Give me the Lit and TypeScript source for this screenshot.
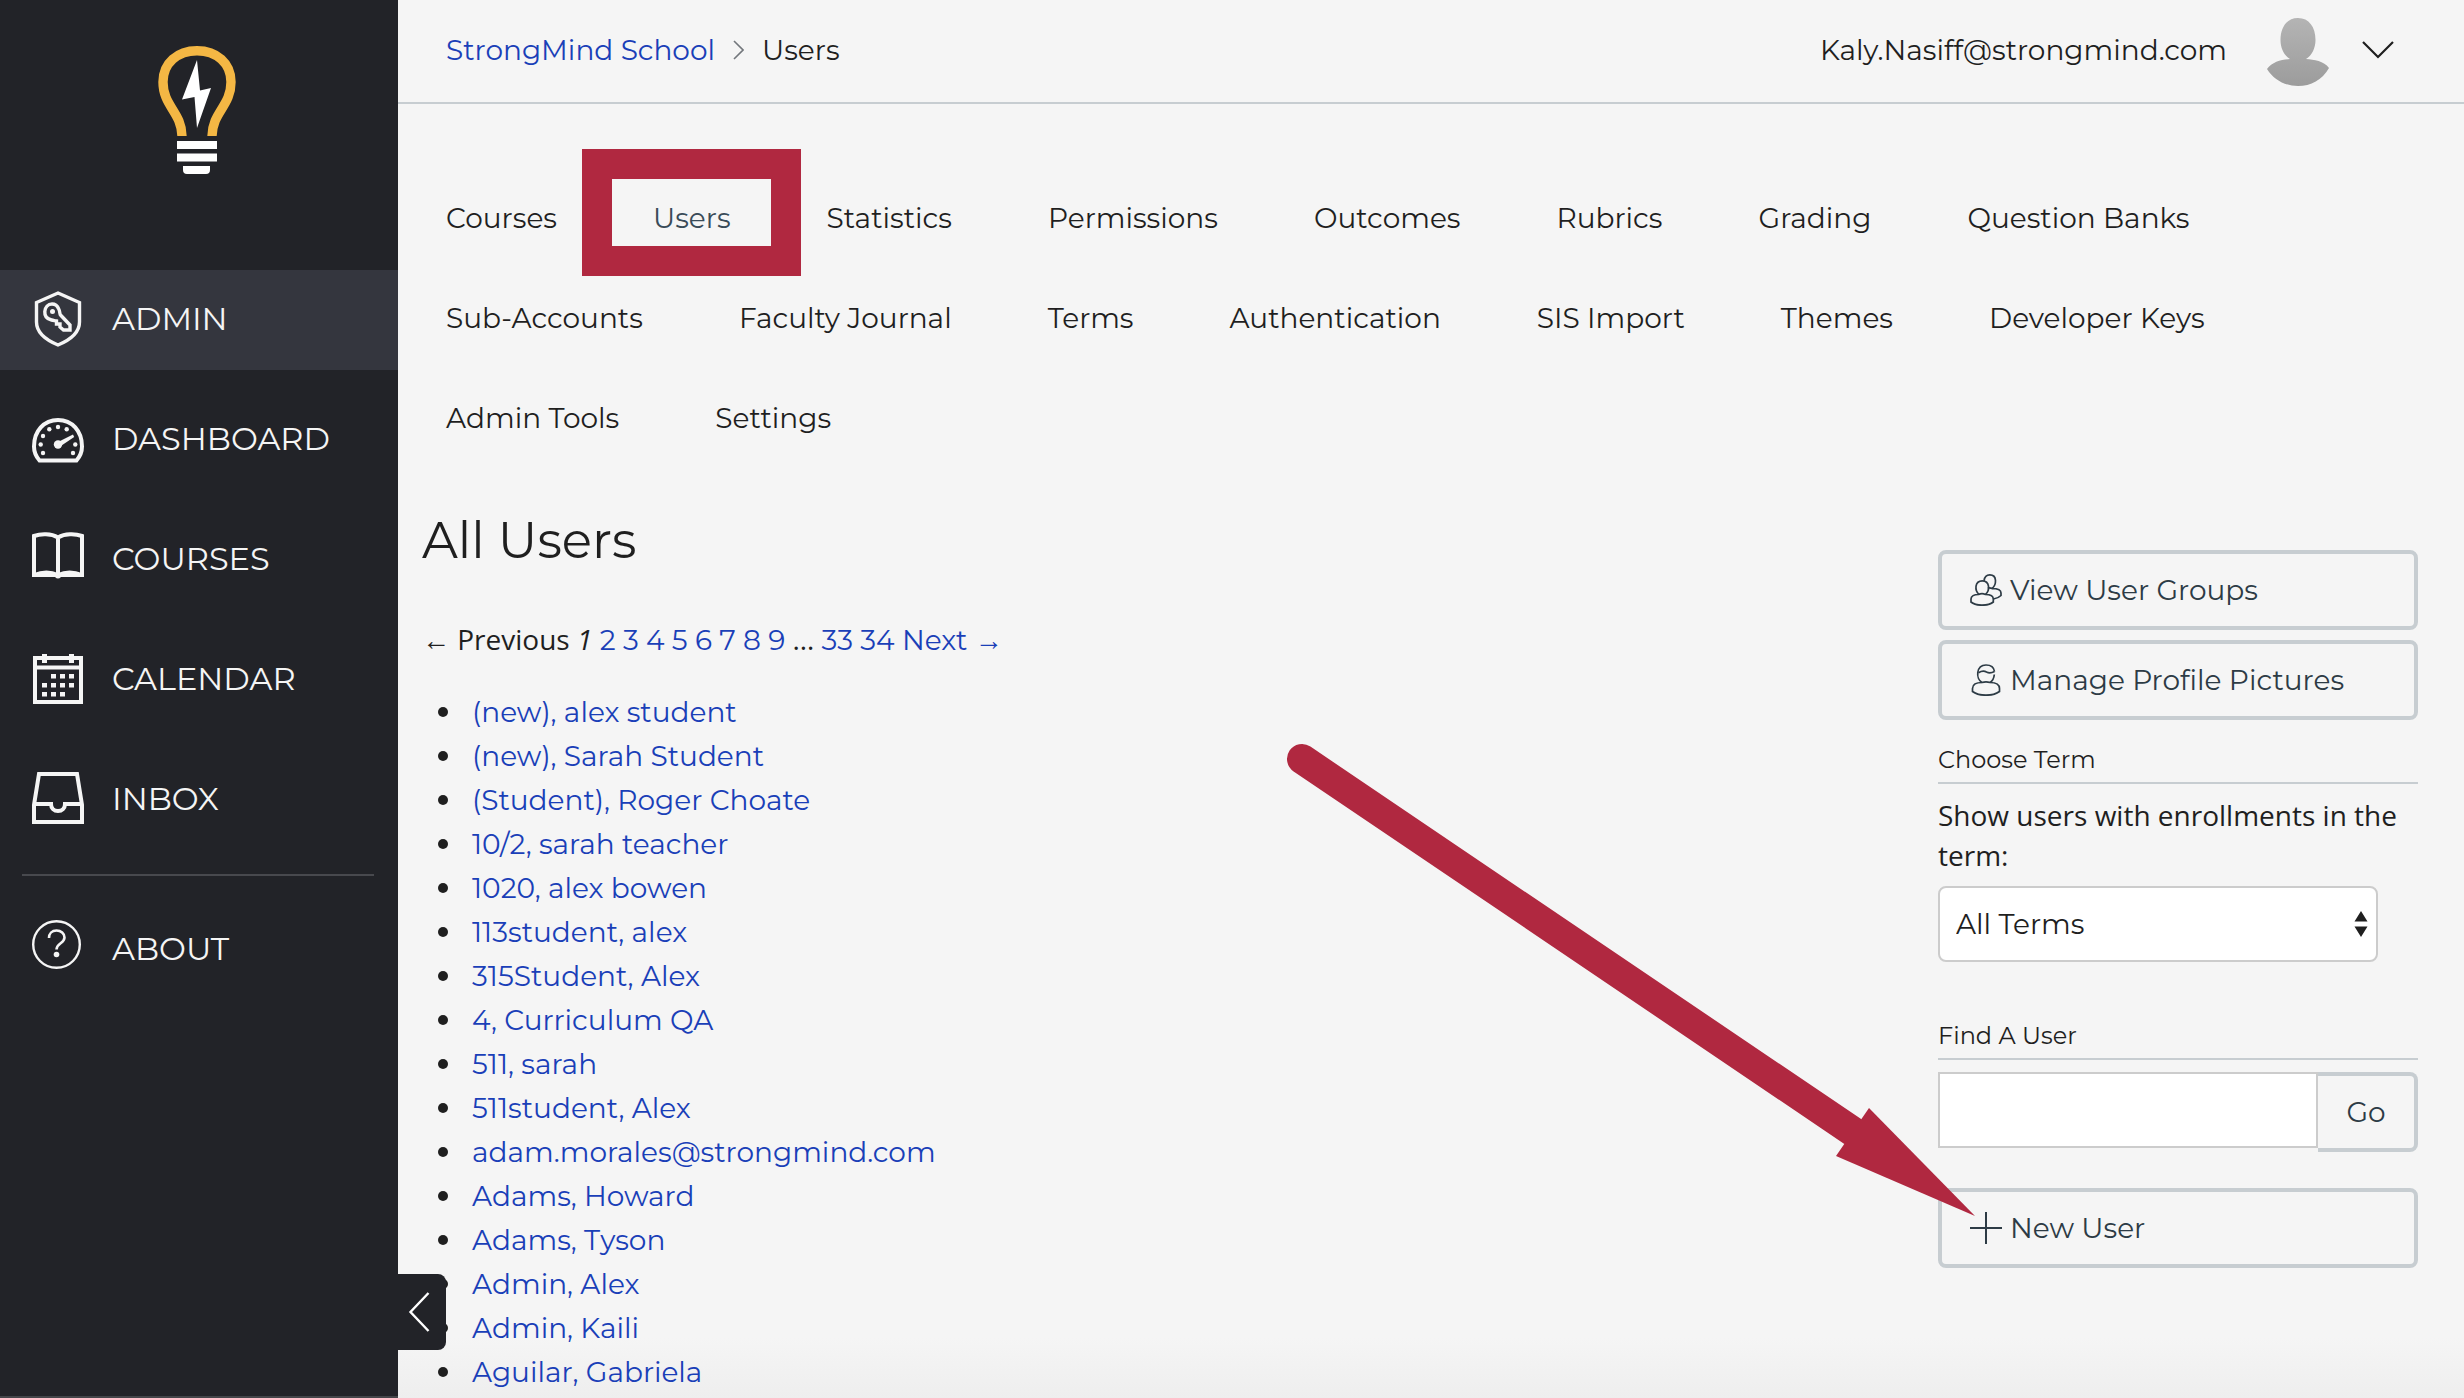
import { LitElement, html, css, svg } from "lit";
import { customElement } from "lit/decorators.js";

const icons = {
  admin: svg`<svg class="icon" viewBox="0 0 52 60"><g fill="none" stroke="#f5f5f5" stroke-width="3.4">
    <path d="M26 4 L47.5 13.500 V33 C47.500 43 38 51 26 56 C14 51 4.500 43 4.500 33 V13.500 Z"/>
    <path d="M26.500 19.500 C28.500 23 27.500 25.500 28.500 26 L38 36 V41 H31.500 L28 38 V35 H24.500 V32 C22 31.500 21.500 31.500 19.500 31 C15 30 12.500 27 12.800 22.500 C13.200 18 16 15 20 15 C23 15 25.500 17 26.500 19.500 Z"/></g>
    <circle cx="20.500" cy="22.500" r="2.500" fill="#f5f5f5"/></svg>`,
  dashboard: svg`<svg class="icon" viewBox="0 -1 52 60"><path d="M7.500 50.500 C4 46.500 2 41.500 2 36.500 C2 21 12 10 26 10 C40 10 50 21 50 36.500 C50 41.500 48 46.500 44.500 50.500 Z" fill="none" stroke="#f5f5f5" stroke-width="4"/>
    <g fill="#f5f5f5"><circle cx="11" cy="43" r="2.200"/><circle cx="8.700" cy="34.500" r="2.200"/><circle cx="11" cy="26" r="2.200"/><circle cx="17.300" cy="19.300" r="2.200"/><circle cx="26" cy="17" r="2.200"/><circle cx="34.700" cy="19.300" r="2.200"/><circle cx="43.300" cy="34.500" r="2.200"/><circle cx="41" cy="43" r="2.200"/><circle cx="26" cy="34.500" r="4.200"/><path d="M26 32 L41 24.500 L42.200 27 L28 36.500 Z"/></g></svg>`,
  courses: svg`<svg class="icon" viewBox="0 3 52 60"><path d="M2 50 V10 C9 7.500 19 7.500 26 11.500 C33 7.500 43 7.500 50 10 V50 M26 11 V50 M0 49 L2 49 C10 46 19 46 26 49 C33 46 42 46 50 49 H52" fill="none" stroke="#f5f5f5" stroke-width="4"/><path d="M2 48 H50 V51 H29 Q26 54 23 51 H2 Z" fill="#f5f5f5"/></svg>`,
  calendar: svg`<svg class="icon" viewBox="0 0 52 60"><path d="M3 9 H49 V53 H3 Z M3 18.500 H49" fill="none" stroke="#f5f5f5" stroke-width="4"/>
    <path fill="#f5f5f5" d="M10 5h5v9h-5zM37 5h5v9h-5zM19 25h5v4.500h-5zM28 25h5v4.500h-5zM37 25h5v4.500h-5zM10 34h5v4.500h-5zM19 34h5v4.500h-5zM28 34h5v4.500h-5zM37 34h5v4.500h-5zM10 43h5v4.500h-5zM19 43h5v4.500h-5zM28 43h5v4.500h-5z"/></svg>`,
  inbox: svg`<svg class="icon" viewBox="0 1 52 60"><path d="M7 6 H45 L50 37 V54 H2 V37 Z M2 36 H19 C19 40 22 43 26 43 C30 43 33 40 33 36 H50" fill="none" stroke="#f5f5f5" stroke-width="4"/></svg>`,
  about: svg`<svg class="icon" viewBox="0 1 52 60"><circle cx="24.500" cy="26.500" r="23.300" fill="none" stroke="#f5f5f5" stroke-width="2.400"/>
    <path d="M17 20 C17 15.500 20 12.500 24.500 12.500 C29 12.500 32.500 15.500 32.500 19.500 C32.500 25.500 24.500 25 24.500 31.500" fill="none" stroke="#f5f5f5" stroke-width="2.600"/><circle cx="24.500" cy="36.500" r="2.800" fill="#f5f5f5"/></svg>`,
  groups: svg`<svg class="mini" viewBox="0 0 32 32"><g fill="none" stroke="#2d3b45" stroke-width="1.700">
    <path d="M8.500 20.500 C4 20.500 1 22 1 25 V28 C4 30.500 8 31.200 12 31.200 C16 31.200 20.500 30.500 23.300 28 V25 C23.300 22 20 20.500 15.500 20.500 C13.500 19.600 10.500 19.600 8.500 20.500 Z"/>
    <path d="M9 20.300 C4.500 16.500 4.500 6.800 12.300 6.800 C20 6.800 20 16.500 15.500 20.300"/>
    <path d="M14 6.800 C14.500 3 16.500 0.900 19.800 0.900 C27.500 0.900 26.500 11 22 14.500 C20.500 13.800 19 13.800 17.800 14.200 M22 14.500 C28 14.500 31 16 31 19 V21.500 C29 23.500 26.500 24.500 23.500 25"/></g></svg>`,
  profile: svg`<svg class="mini" viewBox="0 0 32 32"><g fill="none" stroke="#2d3b45" stroke-width="1.700">
    <path d="M12 18.500 C5.500 15 6 1 16 1 C21 1 24 3.800 24.500 7.500 M24.300 10.500 C24 14 22.500 17 20 18.500"/>
    <path d="M8.500 8.700 C12 6.500 14 6.500 16.500 8 C19 9.300 22 8.800 24.500 7.500"/>
    <path d="M12 18.500 C6 18.500 2.500 20.500 2.500 24.500 V27.500 C6 30 11 31.200 16 31.200 C21 31.200 26 30 29.500 27.500 V24.500 C29.500 20.500 26 18.500 20 18.500 C17 17.500 15 17.500 12 18.500 Z"/></g></svg>`,
  plus: svg`<svg class="mini" viewBox="0 0 32 32"><path d="M16 0 V32 M0 16 H32" stroke="#2d3b45" stroke-width="2"/></svg>`,
};

const menu = [
  { label: "ADMIN", icon: icons.admin, active: true },
  { label: "DASHBOARD", icon: icons.dashboard },
  { label: "COURSES", icon: icons.courses },
  { label: "CALENDAR", icon: icons.calendar },
  { label: "INBOX", icon: icons.inbox },
];

const tabs = [
  "Courses", "Users", "Statistics", "Permissions", "Outcomes", "Rubrics", "Grading", "Question Banks",
  "Sub-Accounts", "Faculty Journal", "Terms", "Authentication", "SIS Import", "Themes", "Developer Keys",
  "Admin Tools", "Settings",
];

const users = [
  "(new), alex student", "(new), Sarah Student", "(Student), Roger Choate", "10/2, sarah teacher",
  "1020, alex bowen", "113student, alex", "315Student, Alex", "4, Curriculum QA", "511, sarah",
  "511student, Alex", "adam.morales@strongmind.com", "Adams, Howard", "Adams, Tyson", "Admin, Alex",
  "Admin, Kaili", "Aguilar, Gabriela",
];

@customElement("app-root")
export class AppRoot extends LitElement {
  static styles = css`
    :host {
      display: flex;
      height: 100vh;
      overflow: hidden;
      position: relative;
      background: linear-gradient(#f5f5f5 calc(100% - 60px), #eeeeee);
      color: #1f1f1f;
      font-family: Montserrat, Inter, sans-serif;
      font-size: 28px;
      font-weight: 400;
      line-height: 44px;
    }
    * { box-sizing: border-box; }
    a { color: #1a3fb8; text-decoration: none; }
    svg { display: block; flex: none; }
    .sidebar {
      flex: none;
      width: 398px;
      background: #222328;
      border-bottom: 2px solid #444549;
      position: relative;
    }
    .logo { display: block; padding: 46px 0 0 158px; height: 270px; }
    .menu { display: flex; flex-direction: column; gap: 20px; }
    .entry {
      display: flex;
      align-items: center;
      gap: 28px;
      height: 100px;
      padding: 0 0 2px 32px;
      color: #f5f5f5;
      font-size: 32px;
    }
    .active { background: #34363e; }
    .icon { width: 52px; height: 60px; }
    .divider { height: 2px; margin: 24px 24px 24px 22px; border: 0; background: #48494e; }
    .collapse {
      position: absolute;
      left: 100%;
      bottom: 46px;
      width: 48px;
      height: 76px;
      padding: 0 0 0 10px;
      border: 0;
      border-radius: 0 8px 8px 0;
      background: #222328;
    }
    .main { flex: 1; min-width: 0; }
    .topbar {
      display: flex;
      align-items: center;
      height: 104px;
      padding: 0 70px 2px 48px;
      border-bottom: 2px solid #c7cdd1;
    }
    .crumbs { display: flex; align-items: center; gap: 18px; flex: 1; }
    .account { display: flex; align-items: center; gap: 30px; padding: 0; border: 0; background: none; font: inherit; color: inherit; }
    .avatar { margin: 4px 0 0 7px; }
    .tabs {
      display: flex;
      flex-wrap: wrap;
      column-gap: 96px;
      padding: 64px 48px 43px;
    }
    .tab { position: relative; line-height: 100px; color: #1f1f1f; }
    .current { color: #394b58; }
    .highlight {
      position: absolute;
      left: calc(50% - 110px);
      top: -19px;
      width: 219px;
      height: 127px;
      border: 30px solid #b02840;
      pointer-events: none;
    }
    .content { display: flex; justify-content: space-between; padding: 0 46px 0 24px; }
    h1 { margin: 0 0 46px; font-size: 50px; line-height: 60px; font-weight: 400; }
    .pages { margin: 0 0 27px; font-family: "Open Sans", "Noto Sans", sans-serif; }
    .pages a { font-family: Montserrat, Inter, sans-serif; }
    .pages .arrow { font-family: "Liberation Sans", Arial, sans-serif; }
    .users { margin: 0; padding: 0 0 0 16px; list-style: none; }
    .users li { display: flex; gap: 24px; }
    .users li::before { content: ""; flex: none; width: 10px; height: 10px; margin-top: 17px; border-radius: 50%; background: #1f1f1f; }
    .aside { flex: none; width: 480px; padding-top: 39px; }
    .btn {
      display: flex;
      align-items: center;
      gap: 8px;
      width: 100%;
      height: 80px;
      margin: 0 0 10px;
      padding: 0 28px;
      border: 4px solid #c7cdd1;
      border-radius: 8px;
      background: transparent;
      color: #2d3b45;
      font: inherit;
    }
    .mini { width: 32px; height: 32px; }
    h2 { margin: 0; padding: 12px 0 4px; border-bottom: 2px solid #c7cdd1; font-size: 24px; line-height: 36px; font-weight: 400; }
    .hint { display: block; padding: 11px 0; font-family: "Open Sans", "Noto Sans", sans-serif; line-height: 40px; }
    .select { position: relative; width: 440px; margin-bottom: 44px; }
    select {
      appearance: none;
      display: block;
      width: 100%;
      height: 76px;
      padding: 0 16px;
      border: 2px solid #cccccc;
      border-radius: 8px;
      background: #ffffff;
      color: #1f1f1f;
      font: inherit;
    }
    .arrows { position: absolute; right: 10px; top: 24px; pointer-events: none; }
    .find { display: flex; align-items: flex-start; margin: 12px 0 36px; }
    input { flex: 1; min-width: 0; height: 76px; padding: 0 16px; border: 2px solid #cccccc; background: #ffffff; font: inherit; }
    .go { width: 100px; margin: 0; border-left: 0; border-radius: 0 8px 8px 0; justify-content: center; }
    .new { position: relative; }
    .pointer { position: absolute; right: 443px; bottom: 52px; pointer-events: none; }
  `;

  render() {
    return html`
      <nav class="sidebar" aria-label="Main">
        <a class="logo" href="#" aria-label="StrongMind">
          <svg width="78" height="128" viewBox="0 0 78 128">
            <path d="M24 90 C23.500 66 5 60 5 36 C5 17 19.500 4.700 39 4.700 C58.500 4.700 73 17 73 36 C73 60 54.500 66 54 90" fill="none" stroke="#f4b744" stroke-width="9.400"/>
            <path d="M39 14 L42 44.500 L53 42 L39 82 L36.500 51 L24 53.500 Z" fill="#fff"/>
            <path d="M19 95h40v8h-40zM19 107.500h40v8h-40zM25 120h27v4q0 4-4 4h-19q-4 0-4-4z" fill="#fff"/>
          </svg>
        </a>
        <div class="menu">
          ${menu.map((m) => html`<a href="#" class="entry ${m.active ? "active" : ""}">${m.icon}<span>${m.label}</span></a>`)}
        </div>
        <hr class="divider" />
        <a href="#" class="entry">${icons.about}<span>ABOUT</span></a>
        <button class="collapse" aria-label="Collapse menu">
          <svg width="22" height="40" viewBox="0 0 22 40"><path d="M20.500 1 L2.500 20 L20.500 39" fill="none" stroke="#fff" stroke-width="2.400"/></svg>
        </button>
      </nav>
      <div class="main">
        <header class="topbar">
          <div class="crumbs">
            <a href="#">StrongMind School</a>
            <svg width="11" height="20" viewBox="0 0 11 20"><path d="M1 1 L10 10 L1 19" fill="none" stroke="#73777c" stroke-width="1.600"/></svg>
            <span>Users</span>
          </div>
          <button class="account">
            <span>Kaly.Nasiff@strongmind.com</span>
            <svg class="avatar" width="68" height="68" viewBox="0 0 68 68">
              <defs><linearGradient id="shade" x1="0" y1="0" x2="0" y2="68" gradientUnits="userSpaceOnUse"><stop offset="0" stop-color="#b4b4b4"/><stop offset="1" stop-color="#9c9c9c"/></linearGradient></defs>
              <path fill="url(#shade)" d="M34 0 C45 0 51.500 9 51.500 22 C51.500 30 48 37.500 42 41 C50 41.500 60 43 65 50 C58 62 47 68 34 68 C21 68 10 62 3 51 C8 43.500 18 41.500 26 41 C20 37.500 16.500 30 16.500 22 C16.500 9 23 0 34 0 Z"/>
            </svg>
            <svg width="32" height="18" viewBox="0 0 32 18"><path d="M1 1 L16 16 L31 1" fill="none" stroke="#1f1f1f" stroke-width="2.200"/></svg>
          </button>
        </header>
        <nav class="tabs" aria-label="Account">
          ${tabs.map((t) => html`<a href="#" class="tab ${t === "Users" ? "current" : ""}">${t}${t === "Users" ? html`<span class="highlight"></span>` : ""}</a>`)}
        </nav>
        <div class="content">
          <main>
            <h1>All Users</h1>
            <p class="pages"><span class="arrow">←</span> Previous <em>1</em> ${[2, 3, 4, 5, 6, 7, 8, 9].map((n) => html`<a href="#">${n}</a> `)}… <a href="#">33</a> <a href="#">34</a> <a href="#">Next <span class="arrow">→</span></a></p>
            <ul class="users">${users.map((u) => html`<li><a href="#">${u}</a></li>`)}</ul>
          </main>
          <aside class="aside">
            <button class="btn">${icons.groups}View User Groups</button>
            <button class="btn">${icons.profile}Manage Profile Pictures</button>
            <h2>Choose Term</h2>
            <label class="hint" for="term">Show users with enrollments in the term:</label>
            <div class="select">
              <select id="term"><option>All Terms</option></select>
              <svg class="arrows" width="14" height="28" viewBox="0 0 14 28"><path d="M7 1 L13.500 11.500 H0.500 Z M7 27 L0.500 16.500 H13.500 Z" fill="#1f1f1f"/></svg>
            </div>
            <h2 id="find">Find A User</h2>
            <div class="find">
              <input type="text" aria-labelledby="find" />
              <button class="btn go">Go</button>
            </div>
            <div class="new">
              <button class="btn">${icons.plus}New User</button>
              <svg class="pointer" width="690" height="474" viewBox="0 0 690 474">
                <path d="M17 17 L567 389" stroke="#b02840" stroke-width="30" stroke-linecap="round"/>
                <path d="M584 366 L690 474 L551 414 Z" fill="#b02840"/>
              </svg>
            </div>
          </aside>
        </div>
      </div>
    `;
  }
}
